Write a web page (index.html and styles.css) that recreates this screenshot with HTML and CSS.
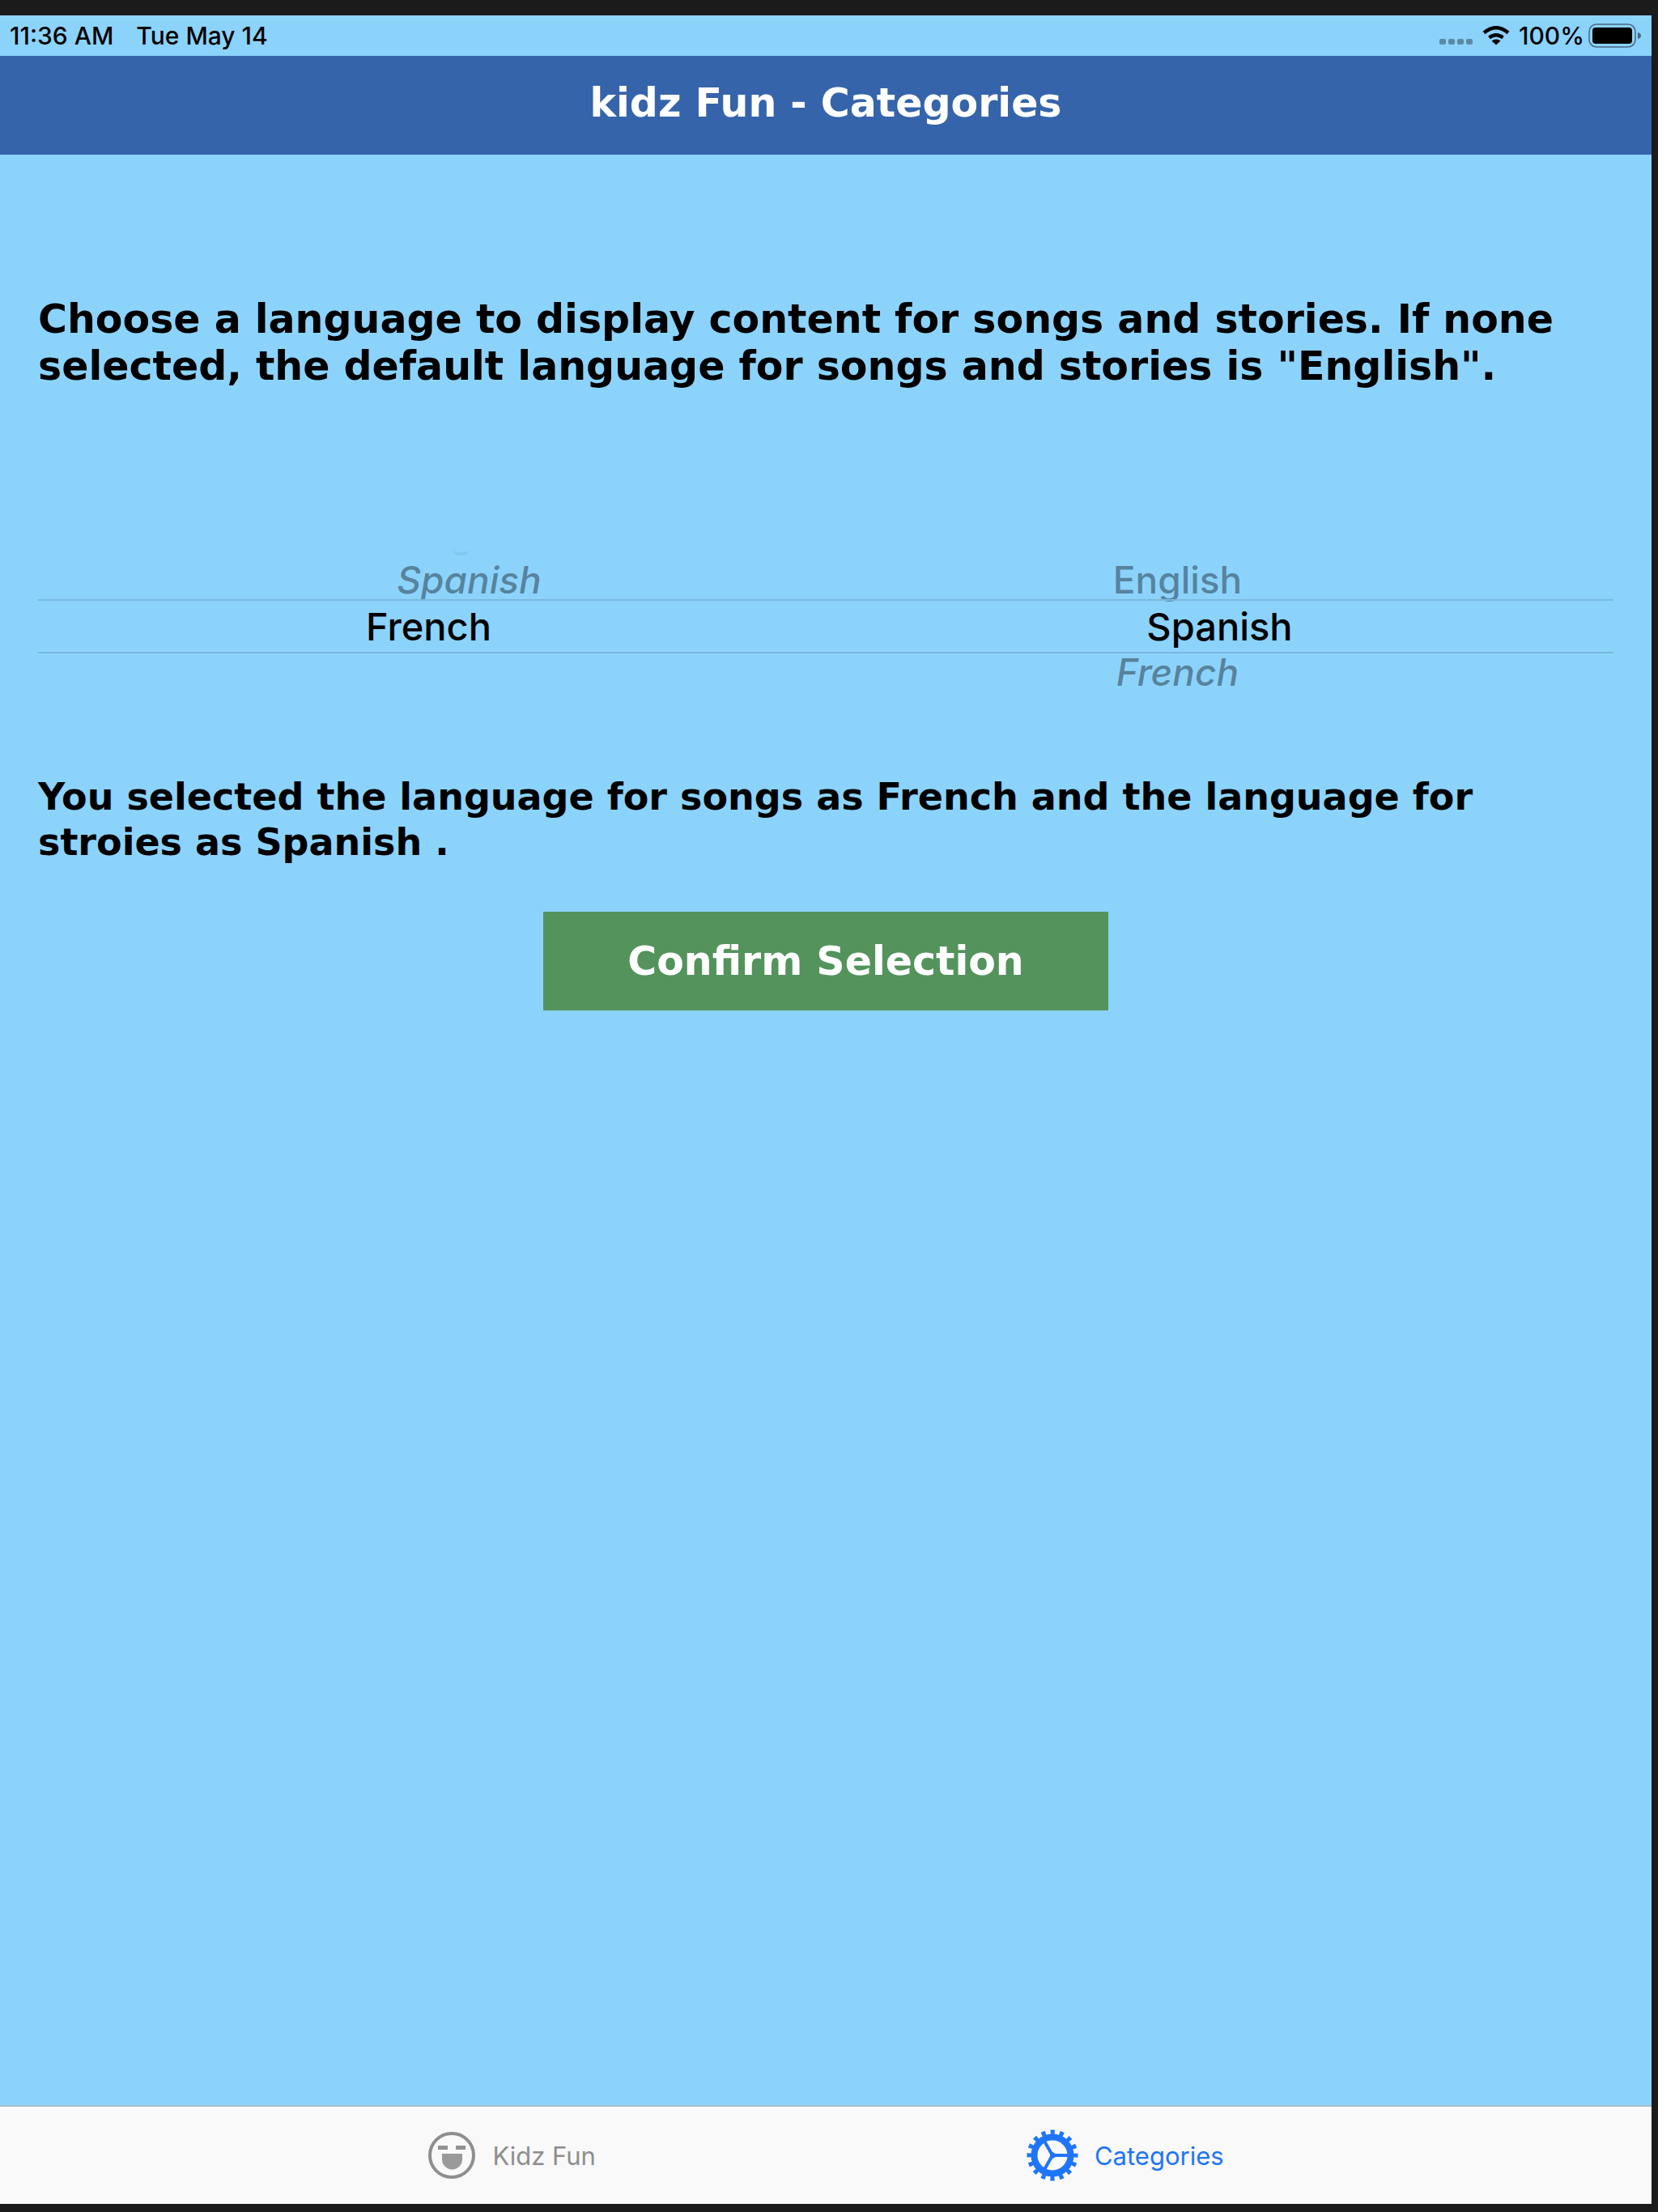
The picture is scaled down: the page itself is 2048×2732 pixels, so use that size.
FILE: index.html
```html
<!DOCTYPE html>
<html lang="en">
<head>
    <meta charset="UTF-8">
    <title>kidz Fun - Categories</title>
    <link rel="stylesheet" href="styles.css">
</head>
<body>
    <div class="screen">
        <div class="status-bar">
            <span>11:36 AM</span>
            <span>Tue May 14</span>
            <div class="status-icons">
                <svg class="signal" width="42" height="26" viewBox="0 0 42 26" fill="#000" fill-opacity="0.35">
                    <rect x="0" y="17" width="8" height="7" rx="2"/>
                    <rect x="11" y="17" width="8" height="7" rx="2"/>
                    <rect x="22" y="17" width="8" height="7" rx="2"/>
                    <rect x="33" y="17" width="8" height="7" rx="2"/>
                </svg>
                <svg class="wifi" width="34" height="24" viewBox="0 0 34 24">
                    <path d="M2 8.500Q17-4 32 8.500M8.500 14.500Q17 8 25.500 14.500" fill="none" stroke="#000" stroke-width="4.500"/>
                    <path d="M17 23.500L11.500 18.500Q17 14.500 22.500 18.500Z"/>
                </svg>
                <span>100%</span>
                <svg class="battery" width="66" height="30" viewBox="0 0 66 30">
                    <rect x="1" y="1" width="57" height="28" rx="9" fill="none" stroke="#000" stroke-opacity="0.5" stroke-width="1.500"/>
                    <rect x="5" y="5" width="49" height="20" rx="4"/>
                    <path d="M61 11Q65 12 65 15T61 19Z" fill-opacity="0.5"/>
                </svg>
            </div>
        </div>
        <header>
            <h1>kidz Fun - Categories</h1>
        </header>
        <main>
            <p class="intro">Choose a language to display content for songs and stories. If none selected, the default language for songs and stories is "English".</p>

            <!-- Language picker: songs on the left, stories on the right -->
            <form class="picker">
                <div class="wheel songs" role="radiogroup" aria-label="Language for songs">
                    <label class="item edge"><input type="radio" name="songs">English</label>
                    <label class="item above lean"><input type="radio" name="songs">Spanish</label>
                    <label class="item selected"><input type="radio" name="songs" checked>French</label>
                </div>
                <div class="wheel stories" role="radiogroup" aria-label="Language for stories">
                    <div class="edge"></div>
                    <label class="item above"><input type="radio" name="stories">English</label>
                    <label class="item selected"><input type="radio" name="stories" checked>Spanish</label>
                    <label class="item below lean"><input type="radio" name="stories">French</label>
                </div>
            </form>

            <p class="result">You selected the language for songs as French and the language for stroies as Spanish .</p>
            <button class="confirm-button" type="button">Confirm Selection</button>
        </main>
        <nav>
            <a class="tab" href="#kidz-fun">
                <svg width="60" height="60" viewBox="0 0 60 60">
                    <circle cx="30" cy="30" r="27" fill="none" stroke="#8e8e8e" stroke-width="4"/>
                    <path d="M13 20.500h12M35 20.500h12" stroke="#929292" stroke-width="5"/>
                    <path d="M18 28h25v7a12.500 12.500 0 0 1-25 0z" fill="#9a9a9a"/>
                </svg>
                Kidz Fun
            </a>
            <a class="tab active" href="#categories">
                <svg width="64" height="64" viewBox="0 0 64 64" fill="none" stroke="#1f75f7">
                    <circle cx="32" cy="32" r="22.500" stroke-width="8"/>
                    <circle cx="32" cy="32" r="28" stroke-width="7" stroke-dasharray="5 5.996" stroke-dashoffset="2.500"/>
                    <path d="M32 32H52M32 32L22 14.500M32 32L22 49.500" stroke-width="4"/>
                    <path d="M39 32L29 26V38Z" fill="#1f75f7" stroke="none"/>
                </svg>
                Categories
            </a>
        </nav>
    </div>
</body>
</html>
```
FILE: styles.css
```css
* {
    box-sizing: border-box;
}
body {
    font-family: "Inter", "Liberation Sans", sans-serif;
    background-color: #1b1b1b;
    margin: 0;
    padding: 19px 8px 10px 0;
    min-height: 100vh;
    display: flex;
}
.screen {
    flex: 1;
    display: flex;
    flex-direction: column;
    background-color: #8cd3fc;
    color: #000;
}
.status-bar {
    display: flex;
    align-items: center;
    gap: 28px;
    height: 50px;
    padding: 0 12px;
    font-size: 30px;
    font-weight: 500;
}
.status-icons {
    display: flex;
    align-items: center;
    gap: 11px;
    margin-left: auto;
}
.battery {
    margin-left: -6px;
}
header {
    background-color: #3564aa;
    color: #fff;
    padding: 30px 0 34px;
    text-align: center;
}
h1 {
    font-family: "DejaVu Sans", sans-serif;
    font-size: 49px;
    line-height: 58px;
    margin: 0;
}
main {
    flex: 1;
    padding: 175px 47px 0;
    font-family: "DejaVu Sans", sans-serif;
    font-size: 49px;
    font-weight: bold;
    line-height: 58px;
}
.intro {
    margin: 0 0 156px;
}
.picker {
    display: grid;
    grid-template-columns: 1fr 1fr;
    height: 232px;
    margin-bottom: 86px;
    font-family: "Inter", "Liberation Sans", sans-serif;
    font-weight: 500;
    line-height: 54px;
}
.picker input {
    appearance: none;
    width: 0;
    height: 0;
    margin: 0;
}
.wheel {
    display: flex;
    flex-direction: column;
}
.item {
    display: flex;
    justify-content: center;
    font-size: 46px;
    color: rgba(0, 0, 0, 0.4);
}
.songs .item {
    padding-left: 92px;
}
.stories .item {
    padding-right: 104px;
}
.lean {
    font-style: italic;
}
/* Only the bottom of this row is still visible on the wheel */
.edge {
    height: 54px;
    line-height: 42px;
    mask-image: linear-gradient(transparent 76%, rgba(0, 0, 0, 0.4));
}
.above {
    height: 48px;
    align-items: center;
}
.below {
    line-height: 46px;
}
.wheel .selected {
    height: 67px;
    align-items: center;
    padding: 0;
    border-top: 2px solid #7ab9dc;
    border-bottom: 2px solid #7ab9dc;
    font-size: 47px;
    color: #000;
}
.songs .selected {
    padding-right: 8px;
}
.result {
    margin: 0 0 58px;
    font-size: 46px;
    line-height: 56px;
}
.confirm-button {
    display: block;
    margin: 0 auto;
    padding: 33px 104px 31px;
    border: none;
    background-color: #54935c;
    color: #fff;
    font: inherit;
    cursor: pointer;
}
nav {
    display: flex;
    justify-content: center;
    gap: 532px;
    padding: 28px 0;
    border-top: 2px solid #a9b9c2;
    background-color: #f9f9f9;
}
.tab {
    display: flex;
    align-items: center;
    gap: 20px;
    height: 64px;
    font-size: 31px;
    color: #8e8e8e;
    text-decoration: none;
}
.active {
    color: #1f75f7;
}
```
